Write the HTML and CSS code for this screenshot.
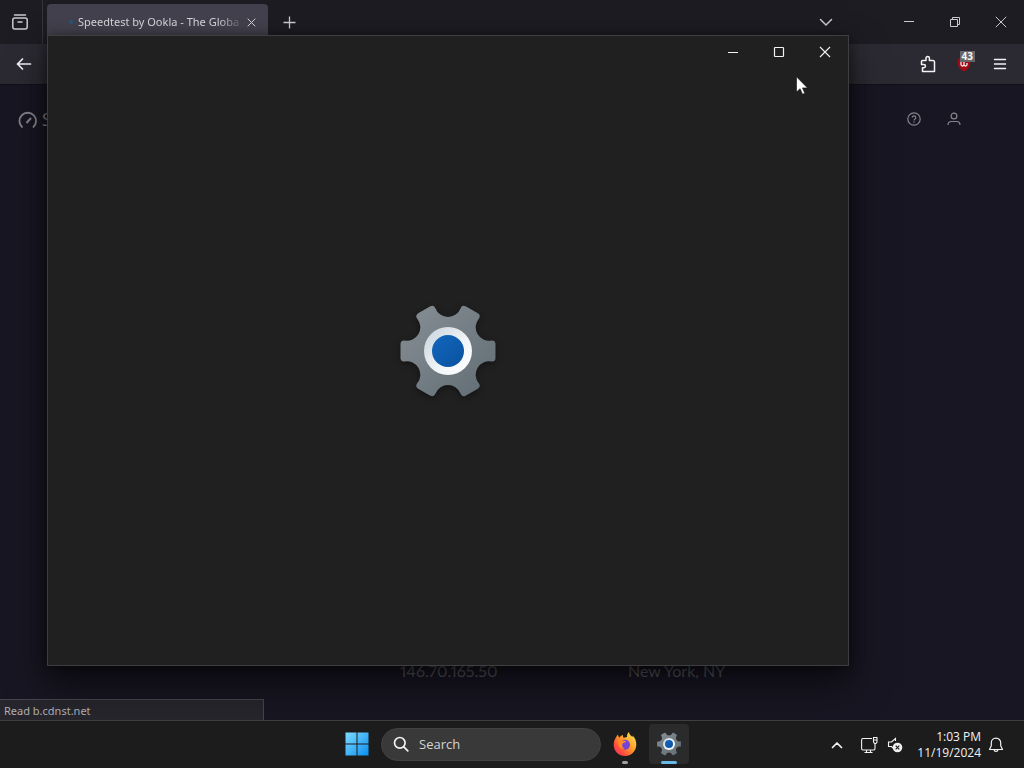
FILE: index.html
```html
<!DOCTYPE html>
<html lang="en">
<head>
<meta charset="utf-8">
<meta name="viewport" content="width=device-width, initial-scale=1">
<title>Desktop</title>
<link rel="stylesheet" href="styles.css">
</head>
<body>
<svg class="defs" aria-hidden="true">
  <defs>
    <linearGradient id="metal" x1="0" y1="0" x2="1" y2="1"><stop offset="0" stop-color="#858e93"/><stop offset="1" stop-color="#626d75"/></linearGradient>
    <linearGradient id="ring" x1="0" y1="0" x2="1" y2="1"><stop offset="0" stop-color="#c5d2da"/><stop offset=".6" stop-color="#f3f6f8"/><stop offset="1" stop-color="#ffffff"/></linearGradient>
    <linearGradient id="hub" x1="0" y1="0" x2="1" y2="1"><stop offset="0" stop-color="#1267bd"/><stop offset="1" stop-color="#0a519f"/></linearGradient>
    <linearGradient id="win" x1="0" y1="0" x2="1" y2="1"><stop offset="0" stop-color="#7fdcff"/><stop offset="1" stop-color="#0a8df0"/></linearGradient>
    <linearGradient id="flame" x1="1" y1="0" x2="0" y2="1"><stop offset="0" stop-color="#fff050"/><stop offset=".45" stop-color="#ff9a2a"/><stop offset=".75" stop-color="#ff4a3d"/><stop offset="1" stop-color="#e8257a"/></linearGradient>
    <symbol id="gear" viewBox="-48 -48 96 96">
      <path d="M44-7V7A17 17 0 0 0 28.100 34.600L15.900 41.600A17 17 0 0 0-15.900 41.600L-28.100 34.600A17 17 0 0 0-44 7V-7A17 17 0 0 0-28.100-34.600L-15.900-41.600A17 17 0 0 0 15.900-41.600L28.100-34.600A17 17 0 0 0 44-7Z" fill="url(#metal)" stroke="url(#metal)" stroke-width="7" stroke-linejoin="round"/>
      <circle r="24" fill="url(#ring)"/>
      <circle r="16" fill="url(#hub)"/>
    </symbol>
  </defs>
</svg>
<div class="desktop">
  <main class="browser">
    <div class="tabbar">
      <button class="icon-btn view-btn" aria-label="Recent browsing">
        <svg width="18" height="18" viewBox="0 0 18 18" fill="none" stroke="currentColor" stroke-width="1.5" stroke-linecap="round"><path d="M3.5 2h11"/><rect x="1.8" y="5" width="14.4" height="11" rx="2"/><path d="M7 9h4"/></svg>
      </button>
      <div class="tab">
        <span class="loading-dot"></span>
        <span class="tab-title">Speedtest by Ookla - The Globa</span>
        <button class="icon-btn tab-close" aria-label="Close tab">
          <svg width="9" height="9" viewBox="0 0 9 9" fill="none" stroke="currentColor"><path d="M.7.7l7.6 7.6M8.3.7L.7 8.3"/></svg>
        </button>
      </div>
      <button class="icon-btn new-tab" aria-label="New tab">
        <svg width="13" height="13" viewBox="0 0 13 13" fill="none" stroke="currentColor" stroke-width="1.3"><path d="M6.5.5v12M.5 6.5h12"/></svg>
      </button>
      <span class="spacer"></span>
      <button class="icon-btn list-tabs" aria-label="List all tabs">
        <svg width="14" height="14" viewBox="0 0 14 14" fill="none" stroke="currentColor" stroke-width="1.5" stroke-linecap="round" stroke-linejoin="round"><path d="M1.5 4.5L7 10l5.500-5.500"/></svg>
      </button>
      <div class="controls browser-controls">
        <button class="icon-btn" aria-label="Minimize"><svg width="12" height="12" viewBox="0 0 12 12" stroke="currentColor"><path d="M1 5.500h10"/></svg></button>
        <button class="icon-btn" aria-label="Restore"><svg width="12" height="12" viewBox="0 0 12 12" fill="none" stroke="currentColor"><path d="M1.500 3.500h7v7h-7zM3.500 3.500v-2h7v7h-2"/></svg></button>
        <button class="icon-btn" aria-label="Close"><svg width="12" height="12" viewBox="0 0 12 12" stroke="currentColor"><path d="M.8.8l10.400 10.400M11.200.8L.8 11.200"/></svg></button>
      </div>
    </div>
    <div class="toolbar">
      <button class="icon-btn" aria-label="Back">
        <svg width="16" height="16" viewBox="0 0 16 16" fill="none" stroke="currentColor" stroke-width="1.700" stroke-linecap="round" stroke-linejoin="round"><path d="M14.500 8h-13M6.500 3l-5 5 5 5"/></svg>
      </button>
      <span class="spacer"></span>
      <button class="icon-btn" aria-label="Extensions">
        <svg width="18" height="18" viewBox="0 0 18 18" fill="none" stroke="currentColor" stroke-width="1.500" stroke-linejoin="round"><path d="M3.500 5.500H7V3.300a1.700 1.700 0 0 1 3.400 0v2.200H14a1.500 1.500 0 0 1 1.500 1.500v9.500h-12V12.800h1.300a1.700 1.700 0 0 0 0-3.400H2.500V6.500a1 1 0 0 1 1-1z"/></svg>
      </button>
      <button class="icon-btn blocker" aria-label="Content blocker, 43 blocked">
        <svg width="16" height="16" viewBox="0 0 16 16"><path d="M8 0l6 3c1 6-.5 10-6 12.500C2.500 13 1 9 2 3z" fill="#a00c16"/><path d="M5 5.500v3a1.500 1.500 0 0 0 3 0v-3m0 3a1.500 1.500 0 0 0 3 0V7" fill="none" stroke="#eee" stroke-width="1.300"/></svg>
        <span class="count">43</span>
      </button>
      <button class="icon-btn" aria-label="Open menu">
        <svg width="14" height="14" viewBox="0 0 14 14" stroke="currentColor" stroke-width="1.500" stroke-linecap="round"><path d="M1.500 2.500h11M1.500 7h11M1.500 11.500h11"/></svg>
      </button>
    </div>
    <section class="page">
      <header class="site-header">
        <a class="brand" href="#">
          <svg width="20" height="20" viewBox="0 0 20 20" fill="none" stroke="currentColor" stroke-width="1.800"><path d="M4.500 18.500a8.300 8.300 0 1 1 10.500 0"/><path d="M8.500 14l4.500-5" stroke-width="2"/></svg>
          <span>S</span>
        </a>
        <nav class="site-nav">
          <a href="#" aria-label="Help"><svg width="14" height="14" viewBox="0 0 14 14" fill="none" stroke="currentColor" stroke-width="1.200"><circle cx="7" cy="7" r="6.200"/><path d="M5.200 5.600a1.800 1.800 0 1 1 2.600 1.600c-.6.300-.8.600-.8 1.200M7 9.500v1.200"/></svg></a>
          <a href="#" aria-label="Account"><svg width="14" height="14" viewBox="0 0 14 14" fill="none" stroke="currentColor" stroke-width="1.200"><circle cx="7" cy="4" r="2.900"/><path d="M1 13c0-2.500 1.500-3.500 3.500-3.500h5c2 0 3.500 1 3.500 3.500"/></svg></a>
        </nav>
      </header>
      <footer class="connection">
        <span>146.70.165.50</span>
        <span>New York, NY</span>
      </footer>
    </section>
    <div class="status">Read b.cdnst.net</div>
  </main>

  <section class="settings" aria-label="Settings">
    <div class="controls settings-controls">
      <button class="icon-btn" aria-label="Minimize"><svg width="12" height="12" viewBox="0 0 12 12" stroke="currentColor"><path d="M1 6.500h10"/></svg></button>
      <button class="icon-btn" aria-label="Maximize"><svg width="12" height="12" viewBox="0 0 12 12" fill="none" stroke="currentColor" stroke-width="1.200"><rect x="1.500" y="1.500" width="9" height="9" rx=".7"/></svg></button>
      <button class="icon-btn" aria-label="Close"><svg width="12" height="12" viewBox="0 0 12 12" stroke="currentColor" stroke-width="1.100"><path d="M1 1l10 10M11 1L1 11"/></svg></button>
    </div>
    <div class="splash"><svg class="splash-gear" width="96" height="96"><use href="#gear"/></svg></div>
    <svg class="cursor" width="12" height="19" viewBox="0 0 12 19"><path d="M.5.800v15.200l3.600-3.300 2.400 5.500 2.300-1-2.300-5.300h5z" fill="#fff" stroke="#111" stroke-width=".6"/></svg>
  </section>

  <footer class="taskbar">
    <div class="apps">
      <button class="icon-btn start" aria-label="Start">
        <svg width="24" height="24" viewBox="0 0 24 24" fill="url(#win)"><path d="M.500.500h11v11H.5zM12.500.500h11v11h-11zM.500 12.500h11v11H.5zM12.500 12.500h11v11h-11z"/></svg>
      </button>
      <label class="search">
        <svg width="16" height="16" viewBox="0 0 16 16" fill="none" stroke="currentColor" stroke-width="1.700" stroke-linecap="round"><circle cx="6.800" cy="6.800" r="5.300"/><path d="M10.800 10.800l4 4"/></svg>
        <input type="text" placeholder="Search" aria-label="Search">
      </label>
      <button class="icon-btn app" aria-label="Firefox">
        <svg width="24" height="24" viewBox="0 0 24 24"><path d="M3 5.500C3.500 4 4.300 3 5 2.500c.1 1.400.7 2.300 1.500 3C7.500 4.200 8.800 3.300 10 3c-.3 1 0 2 .7 2.800L14 5c-.2-2 .5-4 2-5 .3 2.500 2 3.500 3.500 5 .2-.5.200-1 .2-1.500C22 6 23.500 9 23.300 13 23 19.500 18 24 12 24S.7 19.500.7 13C.7 10 1.500 7.500 3 5.500z" fill="url(#flame)"/><circle cx="12" cy="12.800" r="5" fill="#7544d5"/><path d="M5 7.500c2-.7 3.800 0 5 1.200 1.500 0 3 .3 3.200 1.100-.7.800-2.200.7-3.200 1.500-1.500 1.500-1 4 1.500 5.700-3 .3-5.500-1.500-6-4-.3-2-.2-3.500-.5-5.500z" fill="#ff8a27"/></svg>
        <span class="indicator"></span>
      </button>
      <button class="icon-btn app active" aria-label="Settings">
        <svg width="24" height="24"><use href="#gear"/></svg>
        <span class="indicator"></span>
      </button>
    </div>
    <div class="tray">
      <button class="icon-btn" aria-label="Show hidden icons"><svg width="12" height="12" viewBox="0 0 12 12" fill="none" stroke="currentColor" stroke-width="1.700" stroke-linecap="round" stroke-linejoin="round"><path d="M1.500 8.500L6 4l4.500 4.500"/></svg></button>
      <button class="icon-btn quick" aria-label="Network and volume">
        <svg width="17" height="18" viewBox="0 0 17 18" fill="none" stroke="currentColor" stroke-width="1.100"><path d="M11 2.500H2A1.500 1.500 0 0 0 .6 4v8.500A1.500 1.500 0 0 0 2 14h10.500a1.500 1.500 0 0 0 1.500-1.500V8M5.500 14v2.500M9.500 14v2.500M3.500 16.500h8M12.500 4V1.500h3.500V6l-1 1.500h-1.500l-1-1.500zM12.500 4H16"/></svg>
        <svg width="16" height="16" viewBox="0 0 16 16"><path d="M8.500 4V1.500L4.500 5H1.500v4.500h3L6 11" fill="none" stroke="currentColor" stroke-width="1.100"/><circle cx="10.500" cy="10.500" r="4.800" fill="#eee"/><path d="M8.700 8.700l3.600 3.600M12.300 8.700l-3.600 3.600" stroke="#222" stroke-width="1.200"/></svg>
      </button>
      <button class="clock"><span>1:03 PM</span><span>11/19/2024</span></button>
      <button class="icon-btn" aria-label="Notifications"><svg width="16" height="16" viewBox="0 0 16 16" fill="none" stroke="currentColor" stroke-width="1.200" stroke-linejoin="round"><path d="M8 1.200c-2.800 0-4.700 2-4.700 4.600v3L1.500 12.500h13l-1.800-3.700v-3C12.700 3.200 10.800 1.200 8 1.200zM6 12.700c.3 2.300 3.700 2.300 4 0"/></svg></button>
    </div>
  </footer>
</div>
</body>
</html>
```
FILE: styles.css
```css
* { box-sizing: border-box; }
body { margin: 0; background: #181622; color: #f2f2f2; font-family: "Open Sans", "Noto Sans", sans-serif; font-size: 12px; }
button, input { font: inherit; color: inherit; }
a { color: inherit; text-decoration: none; }
svg { display: block; flex: none; }
.defs { position: absolute; width: 0; height: 0; }
.spacer { flex: 1; }
.icon-btn { display: flex; align-items: center; justify-content: center; padding: 0; border: 0; background: none; }

.desktop { position: relative; display: flex; flex-direction: column; height: 100vh; overflow: hidden; }
.browser { position: relative; flex: 1; display: flex; flex-direction: column; min-height: 0; }

.tabbar { display: flex; align-items: center; height: 44px; background: #1d1c22; color: #c9c9ce; }
.view-btn { width: 43px; height: 44px; padding-right: 3px; border-right: 1px solid #35343b; }
.tab { display: flex; align-items: center; width: 221px; height: 37px; margin-left: 4px; padding: 0 12px 0 22px; border-radius: 4px 4px 0 0; background: #42414d; color: #d6d6da; }
.loading-dot { width: 4px; height: 4px; margin-right: 5px; border-radius: 50%; background: #27557f; }
.tab-title { flex: 1; min-width: 0; overflow: hidden; white-space: nowrap; font-family: "Noto Sans", sans-serif; font-size: 11px; line-height: 16px; -webkit-mask-image: linear-gradient(90deg, #000 85%, transparent); mask-image: linear-gradient(90deg, #000 85%, transparent); }
.tab-close { width: 9px; margin-left: 3px; }
.new-tab { width: 42px; }
.list-tabs { width: 40px; margin-right: 40px; }
.controls { display: flex; }
.controls .icon-btn { width: 46px; height: 32px; }

.toolbar { display: flex; align-items: center; height: 41px; padding: 0 6px; background: #2b2a32; border-bottom: 1px solid #111016; color: #f4f4f6; }
.toolbar .icon-btn { width: 36px; height: 36px; }
.blocker { position: relative; }
.count { position: absolute; top: 5px; right: 7px; padding: 0 2px; background: #666668; font-size: 10px; font-weight: 700; line-height: 11px; }

.page { flex: 1; display: flex; flex-direction: column; justify-content: space-between; background: #181622; }
.site-header { display: flex; align-items: center; justify-content: space-between; padding: 21px 63px 0 18px; color: #85848d; }
.brand { display: flex; align-items: center; gap: 4px; font-size: 18px; line-height: 26px; }
.site-nav { display: flex; gap: 26px; }
.connection { display: grid; grid-template-columns: 228px 1fr; padding: 0 0 38px 400px; color: #55545a; font-family: Lato, sans-serif; font-size: 16px; font-variant-numeric: proportional-nums; line-height: 22px; }
.status { position: absolute; left: 0; bottom: 0; width: 264px; height: 21px; padding-left: 4px; border: solid #46454d; border-width: 1px 1px 0 0; background: #27262d; color: #b0b0b4; font-family: "Noto Sans", sans-serif; font-size: 11px; line-height: 22px; }

.settings { position: absolute; top: 35px; right: 175px; bottom: 102px; left: 47px; display: flex; flex-direction: column; border: 1px solid #3e3e40; background: #202020; box-shadow: 0 20px 36px rgba(0, 0, 0, .5), 0 2px 12px rgba(0, 0, 0, .5); }
.settings-controls { justify-content: flex-end; height: 32px; }
.splash { flex: 1; display: flex; align-items: center; justify-content: center; padding-bottom: 32px; }
.splash-gear { filter: drop-shadow(0 2px 3px rgba(0, 0, 0, .4)); }
.cursor { position: absolute; top: 40px; right: 40px; }

.taskbar { display: flex; align-items: center; justify-content: center; position: relative; height: 48px; padding-bottom: 1px; background: #1c1c1c; border-top: 1px solid #3d3d42; }
.apps { display: flex; align-items: center; gap: 4px; padding-left: 2px; }
.start { width: 40px; height: 40px; }
.search { display: flex; align-items: center; gap: 10px; width: 220px; height: 33px; padding: 0 11px; border: 1px solid #424242; border-radius: 17px; background: #393939; }
.search input { flex: 1; min-width: 0; padding: 0; border: 0; outline: 0; background: none; font-size: 13px; line-height: 20px; }
.search input::placeholder { color: #d4d4d4; opacity: 1; }
.app { position: relative; width: 40px; height: 40px; border-radius: 4px; }
.active { background: #2b2b2b; }
.indicator { position: absolute; bottom: 0; left: 50%; width: 6px; height: 3px; border-radius: 2px; background: #a0a0a0; transform: translateX(-50%); }
.active .indicator { width: 16px; background: #68b9e8; }
.tray { position: absolute; top: 0; right: 20px; bottom: 0; display: flex; align-items: center; }
.quick { gap: 9px; margin: 0 14px 0 18px; }
.clock { display: flex; flex-direction: column; align-items: flex-end; margin-right: 7px; padding: 0; border: 0; background: none; font-size: 12px; line-height: 16px; }
```
